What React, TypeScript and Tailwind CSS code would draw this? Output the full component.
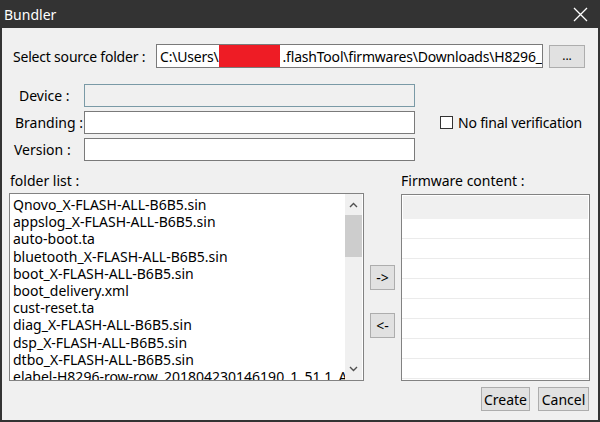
const files = [
  "Qnovo_X-FLASH-ALL-B6B5.sin",
  "appslog_X-FLASH-ALL-B6B5.sin",
  "auto-boot.ta",
  "bluetooth_X-FLASH-ALL-B6B5.sin",
  "boot_X-FLASH-ALL-B6B5.sin",
  "boot_delivery.xml",
  "cust-reset.ta",
  "diag_X-FLASH-ALL-B6B5.sin",
  "dsp_X-FLASH-ALL-B6B5.sin",
  "dtbo_X-FLASH-ALL-B6B5.sin",
  "elabel-H8296-row-row_201804230146190_1_51.1_A",
]

// a plain windows-style push button
function Btn({ label, className }: { label: string; className: string }) {
  return (
    <div className={"flex items-center justify-center bg-[#e1e1e1] border border-[#adadad] " + className}>
      {label}
    </div>
  )
}

export default function App() {
  return (
    <div className="w-[600px] h-[422px] flex flex-col bg-[#f0f0f0] border-x-2 border-b-2 border-[#333333] text-[14px] text-black overflow-hidden font-['Noto_Sans',sans-serif]">
      {/* title bar */}
      <div className="h-[28px] shrink-0 bg-[#333333] flex items-center justify-between pl-[2px] pr-[10px] text-white text-[14px]">
        <span>Bundler</span>
        <svg width="15" height="15" viewBox="0 0 15 15">
          <path d="M1 1 L14 14 M14 1 L1 14" stroke="white" strokeWidth="1.3" />
        </svg>
      </div>

      {/* source folder */}
      <div className="flex items-center mt-[16px] pl-[11px]">
        <span className="w-[143px] tracking-[-0.2px]">Select source folder :</span>
        <div className="w-[387px] h-[24px] bg-white border border-[#7a7a7a] flex items-center pl-[3px] overflow-hidden whitespace-nowrap tracking-[-0.2px]">
          <span>C:\Users\</span>
          <span className="w-[61px] h-[22px] bg-[#ee1c25] shrink-0" />
          <span className="ml-[3px] truncate">.flashTool\firmwares\Downloads\H8296_</span>
        </div>
        <Btn label="..." className="ml-[6px] w-[36px] h-[23px] text-[12px]" />
      </div>

      {/* device / branding / version */}
      <div className="flex flex-col gap-[4px] mt-[16px]">
        <div className="flex items-center">
          <span className="w-[82px] pl-[17px]">Device :</span>
          <div className="w-[331px] h-[23px] bg-[#f0f0f0] border border-[#7a9aa6]" />
        </div>
        <div className="flex items-center">
          <span className="w-[82px] pl-[13px]">Branding :</span>
          <div className="w-[331px] h-[23px] bg-white border border-[#7a7a7a]" />
          <div className="ml-[25px] w-[13px] h-[13px] bg-white border border-[#333333]" />
          <span className="ml-[5px] tracking-[-0.2px]">No final verification</span>
        </div>
        <div className="flex items-center">
          <span className="w-[82px] pl-[12px]">Version :</span>
          <div className="w-[331px] h-[23px] bg-white border border-[#7a7a7a]" />
        </div>
      </div>

      {/* section labels */}
      <div className="flex items-center h-[20px] mt-[9px]">
        <span className="w-[399px] pl-[8px]">folder list :</span>
        <span>Firmware content :</span>
      </div>

      {/* lists */}
      <div className="flex mt-[3px]">
        <div className="ml-[7px] w-[355px] h-[188px] bg-white border border-[#828282] flex">
          <div className="flex-1 overflow-hidden pl-[3px] pt-[2px] whitespace-nowrap leading-[17.2px]">
            {files.map((f) => (
              <div key={f}>{f}</div>
            ))}
          </div>
          <div className="w-[17px] mr-[1px] bg-[#f0f0f0] flex flex-col">
            <div className="h-[21px] flex items-center justify-center">
              <svg width="9" height="6" viewBox="0 0 9 6">
                <path d="M1 5 L4.5 1.5 L8 5" fill="none" stroke="#505050" strokeWidth="1.4" />
              </svg>
            </div>
            <div className="h-[42px] bg-[#cdcdcd]" />
            <div className="flex-1" />
            <div className="h-[22px] flex items-center justify-center">
              <svg width="9" height="6" viewBox="0 0 9 6">
                <path d="M1 1 L4.5 4.5 L8 1" fill="none" stroke="#505050" strokeWidth="1.4" />
              </svg>
            </div>
          </div>
        </div>

        <div className="w-[37px] flex flex-col items-start pl-[6px] pt-[72px] gap-[23px]">
          <Btn label="->" className="w-[25px] h-[25px] text-[14px]" />
          <Btn label="<-" className="w-[25px] h-[25px] text-[14px]" />
        </div>

        <div className="w-[189px] h-[187px] mt-[1px] bg-white border border-[#828282] flex flex-col overflow-hidden">
          <div className="h-[23px] mx-[1px] mt-[1px] bg-[#f0f0f0] shrink-0" />
          {Array.from({ length: 8 }).map((_, i) => (
            <div key={i} className="h-[20px] shrink-0 border-b border-[#ebebeb]" />
          ))}
        </div>
      </div>

      {/* bottom buttons */}
      <div className="flex justify-end gap-[8px] mt-[6px] pr-[9px]">
        <Btn label="Create" className="w-[49px] h-[24px]" />
        <Btn label="Cancel" className="w-[51px] h-[24px]" />
      </div>
    </div>
  )
}
